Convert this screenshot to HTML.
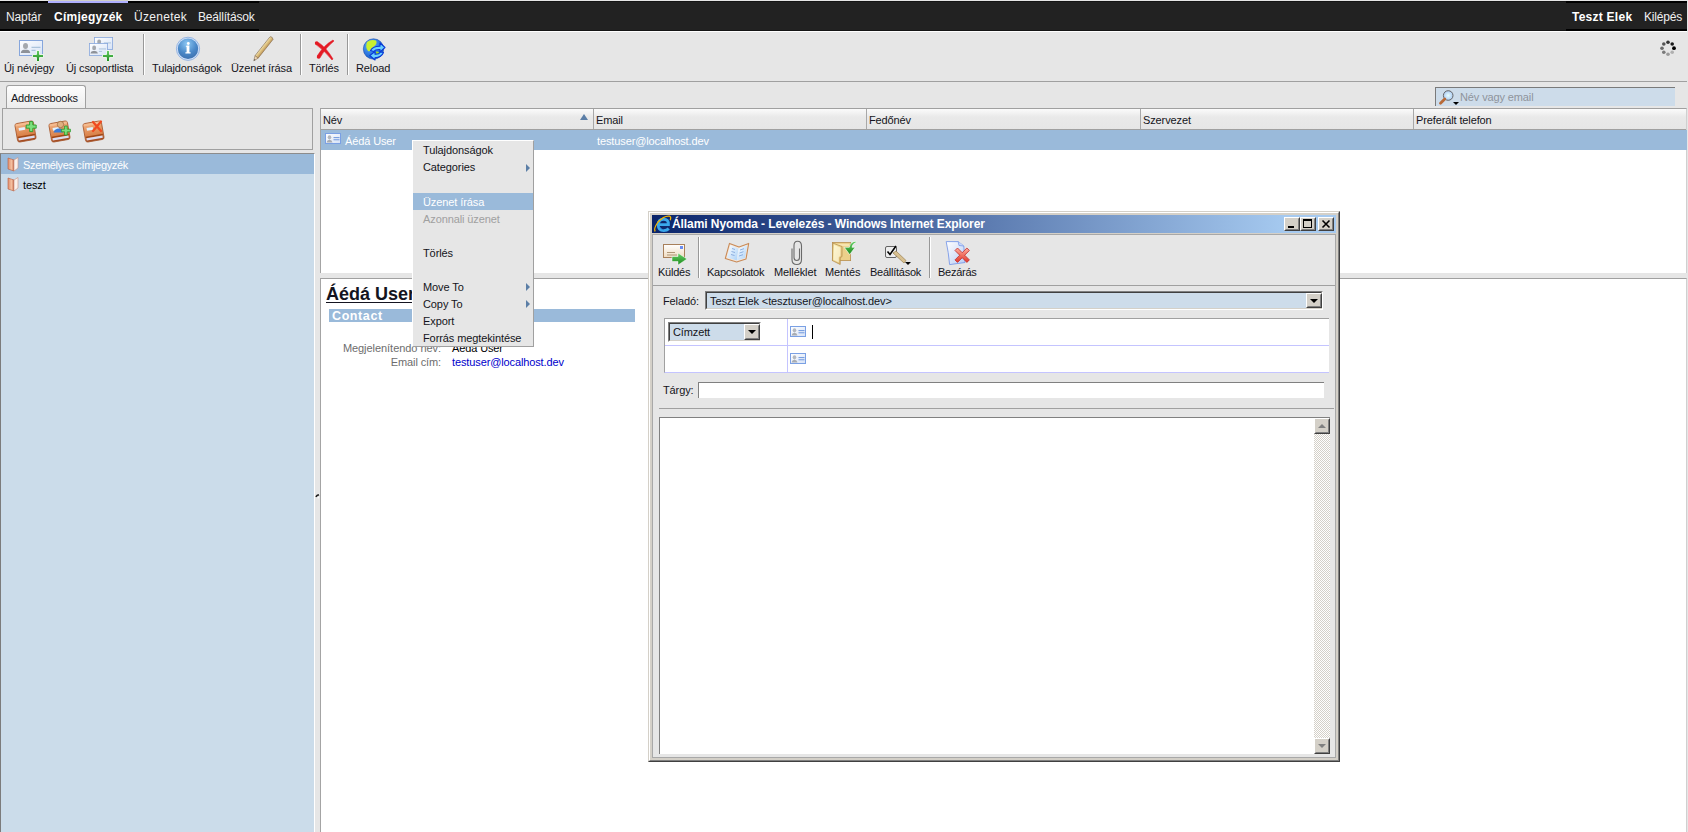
<!DOCTYPE html>
<html><head><meta charset="utf-8">
<style>
*{box-sizing:border-box;margin:0;padding:0}
html,body{width:1688px;height:832px;overflow:hidden;background:#e6e6e6;font-family:"Liberation Sans",sans-serif;font-size:11px;color:#141420}
.a{position:absolute}
.t{position:absolute;white-space:nowrap;line-height:13px;letter-spacing:-0.12px}
#topbar{left:0;top:1px;width:1687px;height:30px;background:#222;border-top:1px solid #151515;border-bottom:1px solid #151515}
#topbar .t{color:#f0f0f0;font-size:12px;top:8px;line-height:14px}
#tb{left:0;top:31px;width:1687px;height:51px;border-top:1px solid #fff;border-bottom:1px solid #a0a0a0;background:#e6e6e6}
.sep{position:absolute;width:2px;background:#989898;border-right:1px solid #fff;background-clip:padding-box}

.hdr{position:absolute;top:109px;height:21px;background:linear-gradient(#fbfbfb,#e9e9e9 40%,#e6e6e6);border-bottom:1px solid #a0a0a0}
.hcol{position:absolute;top:0;height:20px;border-left:1px solid #a8a8a8}
.mi{position:absolute;letter-spacing:-0.1px;left:10px;white-space:nowrap;line-height:17px;height:17px;padding-top:1px}

.w3d{position:absolute;border-style:solid;border-width:1px;border-color:#fff #404040 #404040 #fff;background:#d4d0c8}
.w3d:before{content:"";position:absolute;left:0;top:0;right:0;bottom:0;border-style:solid;border-width:1px;border-color:#d4d0c8 #808080 #808080 #d4d0c8}
.sunk{position:absolute;border-style:solid;border-width:1px;border-color:#808080 #fff #fff #808080}
.sunk:before{content:"";position:absolute;left:0;top:0;right:0;bottom:0;border-style:solid;border-width:1px;border-color:#404040 #d4d0c8 #d4d0c8 #404040}
.btn{position:absolute;background:#d4d0c8;border-style:solid;border-width:1px;border-color:#fff #404040 #404040 #fff}
.btn:before{content:"";position:absolute;left:0;top:0;right:0;bottom:0;border-style:solid;border-width:1px;border-color:#d4d0c8 #808080 #808080 #d4d0c8}
.ie .t{color:#141420}
</style></head><body>

<!-- top bar -->
<div id="topbar" class="a">
  <div class="a" style="left:0;top:-1px;width:259px;height:30px;border-top:2px solid #000;border-bottom:2px solid #000"></div><div class="a" style="left:1566px;top:-1px;width:121px;height:30px;border-top:2px solid #000;border-bottom:2px solid #000"></div><div class="a" style="left:48px;top:-1px;width:80px;height:2px;background:#b0b0ff"></div><div class="a" style="left:48px;top:-2px;width:80px;height:1px;background:#d0d0c8"></div>
  <div class="t" style="left:6px">Naptár</div>
  <div class="t" style="left:54px;font-weight:bold;color:#fff;letter-spacing:0.25px">Címjegyzék</div>
  <div class="t" style="left:134px;letter-spacing:0.3px">Üzenetek</div>
  <div class="t" style="left:198px;letter-spacing:-0.2px">Beállítások</div>
  <div class="t" style="left:1572px;font-weight:bold;color:#fff;letter-spacing:0.25px">Teszt Elek</div>
  <div class="t" style="left:1644px;letter-spacing:-0.2px">Kilépés</div>
</div>

<!-- toolbar -->
<div id="tb" class="a">
  <div class="t" style="left:4px;top:30px">Új névjegy</div>
  <div class="t" style="left:66px;top:30px">Új csoportlista</div>
  <div class="sep" style="left:143px;top:2px;height:41px"></div>
  <div class="t" style="left:152px;top:30px">Tulajdonságok</div>
  <div class="t" style="left:231px;top:30px">Üzenet írása</div>
  <div class="sep" style="left:300px;top:2px;height:41px"></div>
  <div class="t" style="left:309px;top:30px">Törlés</div>
  <div class="sep" style="left:347px;top:2px;height:41px"></div>
  <div class="t" style="left:356px;top:30px">Reload</div>
</div>


<!-- search -->
<div class="a" style="left:1435px;top:87px;width:240px;height:19px;background:#cddcea;border-top:1px solid #7a7a7a;border-left:1px solid #7a7a7a"></div>
<div class="t" style="left:1460px;top:91px;color:#8f949c">Név vagy email</div>

<!-- addressbooks tab -->
<div class="a" style="left:6px;top:85px;width:80px;height:24px;border:1px solid #a0a0a0;border-bottom:none;border-radius:3px 3px 0 0;background:linear-gradient(#fdfdfd,#ececec)"></div>
<div class="t" style="left:11px;top:92px;letter-spacing:-0.25px">Addressbooks</div>

<!-- left icon box -->
<div class="a" style="left:2px;top:108px;width:311px;height:42px;border:1px solid #a0a0a0;background:#e6e6e6"></div>

<!-- left list -->
<div class="a" style="left:0;top:153px;width:315px;height:679px;background:#cbdcea;border-top:1px solid #8c8c8c;border-left:1px solid #7c7c7c;border-right:1px solid #fff"></div>
<div class="a" style="left:1px;top:154px;width:313px;height:20px;background:#9abada"></div>
<div class="t" style="left:23px;top:159px;color:#fff;letter-spacing:-0.35px">Személyes címjegyzék</div>
<div class="t" style="left:23px;top:179px;color:#000">teszt</div>

<!-- splitter -->
<svg class="a" style="left:314px;top:492px" width="8" height="8"><path d="M1.2 4.6 Q2.5 2.3 4.6 2 L5.3 3.4 Q3.4 3.6 2.6 5.3 Z" fill="#1a1a1a"/><circle cx="4.3" cy="5.6" r="0.9" fill="#fff" opacity="0.8"/></svg>

<!-- grid -->
<div class="a" style="left:320px;top:108px;width:1367px;height:165px;background:#fff;border-top:1px solid #a0a0a0;border-left:1px solid #a4a4a4;border-right:1px solid #d0d0d0"></div>
<div class="hdr" style="left:321px;width:1365px">
  <div class="hcol" style="left:272px"></div>
  <div class="hcol" style="left:545px"></div>
  <div class="hcol" style="left:819px"></div>
  <div class="hcol" style="left:1092px"></div>
</div>
<div class="t" style="left:323px;top:114px">Név</div>
<div class="a" style="left:580px;top:114px;width:0;height:0;border-left:4px solid transparent;border-right:4px solid transparent;border-bottom:6px solid #5b7ea6"></div>
<div class="t" style="left:596px;top:114px">Email</div>
<div class="t" style="left:869px;top:114px">Fedőnév</div>
<div class="t" style="left:1143px;top:114px">Szervezet</div>
<div class="t" style="left:1416px;top:114px">Preferált telefon</div>
<div class="a" style="left:321px;top:130px;width:1366px;height:20px;background:#9abada"></div>
<div class="t" style="left:345px;top:135px;color:#fff">Áédá User</div>
<div class="t" style="left:597px;top:135px;color:#fff">testuser@localhost.dev</div>

<!-- preview pane -->
<div class="a" style="left:320px;top:278px;width:1367px;height:554px;background:#fff;border-top:1px solid #a0a0a0;border-left:1px solid #a4a4a4;border-right:1px solid #d0d0d0"></div>
<div class="t" style="left:326px;top:284px;font-size:18px;line-height:20px;font-weight:bold;color:#141420;text-decoration:underline;text-underline-offset:2px;text-decoration-thickness:1px;letter-spacing:0">Áédá User</div>
<div class="a" style="left:329px;top:309px;width:306px;height:13px;background:#9abada"></div>
<div class="t" style="left:332px;top:309px;font-size:12.5px;line-height:15px;font-weight:bold;color:#fff;letter-spacing:0.6px">Contact</div>
<div class="t" style="left:241px;width:200px;text-align:right;top:342px;color:#6d6d6d;letter-spacing:-0.05px">Megjelenítendo név:</div>
<div class="t" style="left:452px;top:342px;color:#000">Áédá User</div>
<div class="t" style="left:241px;width:200px;text-align:right;top:356px;color:#6d6d6d">Email cím:</div>
<div class="t" style="left:452px;top:356px;color:#0000cc">testuser@localhost.dev</div>

<!-- context menu -->
<div class="a" style="left:412px;top:140px;width:122px;height:207px;background:#e6e6e6;border-top:1px solid #fff;border-left:1px solid #fff;border-right:1px solid #a0a0a0;border-bottom:1px solid #a0a0a0">
  <div class="mi" style="top:0px">Tulajdonságok</div>
  <div class="mi" style="top:17px">Categories</div>
  <div class="a" style="left:0;top:52px;width:120px;height:17px;background:#9abada"></div>
  <div class="mi" style="top:52px;color:#fff">Üzenet írása</div>
  <div class="mi" style="top:69px;color:#a0a0a0">Azonnali üzenet</div>
  <div class="mi" style="top:103px">Törlés</div>
  <div class="mi" style="top:137px">Move To</div>
  <div class="mi" style="top:154px">Copy To</div>
  <div class="mi" style="top:171px">Export</div>
  <div class="mi" style="top:188px">Forrás megtekintése</div>
  <div class="a" style="left:113px;top:23px;border-top:4px solid transparent;border-bottom:4px solid transparent;border-left:4px solid #5b7ea6"></div>
  <div class="a" style="left:113px;top:142px;border-top:4px solid transparent;border-bottom:4px solid transparent;border-left:4px solid #5b7ea6"></div>
  <div class="a" style="left:113px;top:159px;border-top:4px solid transparent;border-bottom:4px solid transparent;border-left:4px solid #5b7ea6"></div>
</div>

<!-- IE window -->
<div class="ie">
<div class="a" style="left:648px;top:211px;width:692px;height:551px;background:#d4d0c8;border-style:solid;border-width:1px;border-color:#d4d0c8 #404040 #404040 #d4d0c8"></div>
<div class="a" style="left:649px;top:212px;width:690px;height:549px;border-style:solid;border-width:1px;border-color:#fff #808080 #808080 #fff"></div>
<div class="a" style="left:652px;top:215px;width:684px;height:18px;background:linear-gradient(90deg,#0a246a,#a6caf0 93%)"></div>
<div class="t" style="left:672px;top:217px;font-size:12px;line-height:14px;font-weight:bold;color:#fff;letter-spacing:-0.07px">Állami Nyomda - Levelezés - Windows Internet Explorer</div>
<div class="btn" style="left:1284px;top:217px;width:16px;height:14px"></div>
<div class="a" style="left:1288px;top:226px;width:6px;height:2px;background:#000"></div>
<div class="btn" style="left:1300px;top:217px;width:16px;height:14px"></div>
<div class="a" style="left:1303px;top:219px;width:9px;height:9px;border:1px solid #000;border-top-width:2px"></div>
<div class="btn" style="left:1318px;top:217px;width:16px;height:14px"></div>
<svg class="a" style="left:1318px;top:217px" width="16" height="14"><path d="M4.5 3.5 L11.5 10.5 M11.5 3.5 L4.5 10.5" stroke="#000" stroke-width="1.6"/></svg>

<!-- content -->
<div class="a" style="left:652px;top:234px;width:684px;height:524px;background:#e6e6e6;border:1px solid #a8a8a8"></div>
<div class="a" style="left:653px;top:285px;width:682px;height:1px;background:#a0a0a0"></div>
<div class="sep" style="left:698px;top:237px;height:41px"></div>
<div class="sep" style="left:929px;top:237px;height:41px"></div>
<div class="t" style="left:658px;top:266px;letter-spacing:-0.25px">Küldés</div>
<div class="t" style="left:707px;top:266px;letter-spacing:-0.25px">Kapcsolatok</div>
<div class="t" style="left:774px;top:266px">Melléklet</div>
<div class="t" style="left:825px;top:266px">Mentés</div>
<div class="t" style="left:870px;top:266px;letter-spacing:-0.25px">Beállítások</div>
<div class="t" style="left:938px;top:266px;letter-spacing:-0.25px">Bezárás</div>

<div class="t" style="left:663px;top:295px">Feladó:</div>
<div class="sunk" style="left:705px;top:291px;width:618px;height:19px;background:#cddcea"></div>
<div class="t" style="left:710px;top:295px">Teszt Elek &lt;tesztuser@localhost.dev&gt;</div>
<div class="btn" style="left:1306px;top:293px;width:16px;height:15px"></div>
<div class="a" style="left:1310px;top:299px;border-left:4px solid transparent;border-right:4px solid transparent;border-top:4px solid #000"></div>

<div class="a" style="left:664px;top:318px;width:665px;height:55px;background:#fff;border-top:1px solid #a0a0a0;border-left:1px solid #a0a0a0;border-bottom:1px solid #c4c4ff"></div>
<div class="a" style="left:665px;top:345px;width:664px;height:1px;background:#c4c4ff"></div>
<div class="a" style="left:787px;top:319px;width:1px;height:53px;background:#c4c4ff"></div>
<div class="sunk" style="left:668px;top:322px;width:93px;height:20px;background:#cddcea"></div>
<div class="t" style="left:673px;top:326px">Címzett</div>
<div class="btn" style="left:744px;top:324px;width:16px;height:16px"></div>
<div class="a" style="left:748px;top:330px;border-left:4px solid transparent;border-right:4px solid transparent;border-top:4px solid #000"></div>
<div class="a" style="left:812px;top:325px;width:1px;height:14px;background:#000"></div>

<div class="t" style="left:663px;top:384px">Tárgy:</div>
<div class="a" style="left:698px;top:382px;width:626px;height:16px;background:#fff;border-top:1px solid #808080;border-left:1px solid #808080"></div>
<div class="a" style="left:659px;top:408px;width:675px;height:1px;background:#a0a0a0"></div>

<div class="a" style="left:659px;top:417px;width:671px;height:337px;background:#fff;border-top:1px solid #808080;border-left:1px solid #808080"></div>
<svg class="a" style="left:1314px;top:434px" width="16" height="304" shape-rendering="crispEdges"><defs><pattern id="chk" width="2" height="2" patternUnits="userSpaceOnUse"><rect width="2" height="2" fill="#fff"/><rect width="1" height="1" fill="#d4d0c8"/><rect x="1" y="1" width="1" height="1" fill="#d4d0c8"/></pattern></defs><rect width="16" height="304" fill="url(#chk)"/></svg>
<div class="btn" style="left:1314px;top:418px;width:16px;height:16px"></div>
<div class="a" style="left:1318px;top:424px;border-left:4px solid transparent;border-right:4px solid transparent;border-bottom:4px solid #808080"></div>
<div class="btn" style="left:1314px;top:738px;width:16px;height:16px"></div>
<div class="a" style="left:1318px;top:744px;border-left:4px solid transparent;border-right:4px solid transparent;border-top:4px solid #808080"></div>
</div>

<!-- icons overlay -->
<svg class="a" style="left:0;top:0;pointer-events:none" width="1688" height="832" viewBox="0 0 1688 832">
<defs>
  <linearGradient id="gCard" x1="0" y1="0" x2="1" y2="1"><stop offset="0" stop-color="#ffffff"/><stop offset="1" stop-color="#d6e2f6"/></linearGradient>
  <linearGradient id="gGreen" x1="0" y1="0" x2="0" y2="1"><stop offset="0" stop-color="#6ad06a"/><stop offset="1" stop-color="#1a8a1a"/></linearGradient>
  <radialGradient id="gInfo" cx="0.45" cy="0.25" r="0.85"><stop offset="0" stop-color="#8cc8f4"/><stop offset="0.55" stop-color="#4a88c8"/><stop offset="1" stop-color="#3a6aa8"/></radialGradient>
  <linearGradient id="gPencil" gradientUnits="userSpaceOnUse" x1="262" y1="46" x2="265.5" y2="48.8"><stop offset="0" stop-color="#fffcd8"/><stop offset="0.35" stop-color="#e8d090"/><stop offset="1" stop-color="#c09858"/></linearGradient>
  <radialGradient id="gGlobe" cx="0.35" cy="0.3" r="0.8"><stop offset="0" stop-color="#60b0ff"/><stop offset="1" stop-color="#0a50c8"/></radialGradient>
  <linearGradient id="gBook" x1="0" y1="0" x2="0" y2="1"><stop offset="0" stop-color="#f2b080"/><stop offset="0.7" stop-color="#d98048"/><stop offset="1" stop-color="#9a4018"/></linearGradient>
  <linearGradient id="gBook2" x1="0" y1="0" x2="1" y2="0"><stop offset="0" stop-color="#e09070"/><stop offset="0.6" stop-color="#f4c0a0"/><stop offset="1" stop-color="#c87050"/></linearGradient>
  <linearGradient id="gEnv" x1="0" y1="0" x2="0" y2="1"><stop offset="0" stop-color="#ffffff"/><stop offset="1" stop-color="#f0dcc0"/></linearGradient>
  <linearGradient id="gFolder" x1="0" y1="0" x2="1" y2="1"><stop offset="0" stop-color="#fff4b8"/><stop offset="1" stop-color="#d8b060"/></linearGradient>
  <linearGradient id="gPage" x1="0" y1="0" x2="1" y2="1"><stop offset="0" stop-color="#ffffff"/><stop offset="1" stop-color="#b8ccf4"/></linearGradient>
  <radialGradient id="gLens" cx="0.5" cy="0.5" r="0.6"><stop offset="0" stop-color="#e8ffff"/><stop offset="1" stop-color="#a0c0f0"/></radialGradient>
  <symbol id="card" viewBox="0 0 24 16"><rect x="0.5" y="0.5" width="23" height="15" fill="url(#gCard)" stroke="#86a6dc"/>
    <ellipse cx="6.5" cy="6" rx="2.5" ry="3" fill="#a4a8ae"/><path d="M1.8 13 Q2 10.2 5 9.8 L8 9.8 Q11 10.2 11.2 13 Z" fill="#8e9298"/>
    <rect x="12.5" y="6.8" width="9" height="1" fill="#9cb8d4"/><rect x="12.5" y="9.8" width="4" height="1" fill="#9cb8d4"/></symbol>
  <symbol id="plus" viewBox="0 0 12 12"><path d="M4.5 0.5 h3 v4 h4 v3 h-4 v4 h-3 v-4 h-4 v-3 h4 z" fill="url(#gGreen)" stroke="#fff" stroke-width="0.8" stroke-linejoin="round"/></symbol>
  <symbol id="book" viewBox="0 0 24 24"><g transform="rotate(-10 12 12)"><rect x="3" y="3" width="18" height="18" rx="2" fill="url(#gBook)" stroke="#a85a30" stroke-width="0.8"/><rect x="3.6" y="15.6" width="16.8" height="1.6" fill="#a04818"/><rect x="4.2" y="17.2" width="15.6" height="2.2" fill="#dcdcf0"/><rect x="6" y="7.6" width="6" height="2.6" fill="#e0f2ff"/><rect x="3.5" y="3.6" width="17" height="2" fill="#f8c8a0" opacity="0.6"/></g></symbol>
  <symbol id="abook" viewBox="0 0 12 16"><path d="M1 2 L7 4 L7 15 L1 13 Z" fill="url(#gBook2)" stroke="#b86040" stroke-width="0.6"/><path d="M7 4 L11 1.5 L11 12 L7 15 Z" fill="#fbf0ea" stroke="#c89080" stroke-width="0.6"/></symbol>
  <symbol id="scard" viewBox="0 0 16 11"><rect x="0.5" y="0.5" width="15" height="10" fill="url(#gCard)" stroke="#7aa0e4"/><ellipse cx="4.5" cy="4.3" rx="1.8" ry="2.1" fill="#b4b8be"/><path d="M1.5 9.5 Q2 7 4.5 6.8 Q7 7 7.5 9.5 Z" fill="#a8acb2"/><rect x="8.5" y="4" width="6" height="1.1" fill="#7aa0e0"/><rect x="8.5" y="6.2" width="6" height="1.1" fill="#7aa0e0"/></symbol>
</defs>

<!-- main toolbar -->
<use href="#card" x="19" y="40" width="24" height="16"/>
<use href="#plus" x="32" y="50" width="12" height="12"/>
<use href="#card" x="94" y="37" width="19" height="13"/>
<use href="#card" x="89" y="43" width="19" height="13"/>
<use href="#plus" x="102" y="50" width="12" height="12"/>

<circle cx="188" cy="48.8" r="11.6" fill="#cfe0f8" stroke="#90b0e0" stroke-width="0.9"/>
<circle cx="188" cy="48.8" r="10.2" fill="url(#gInfo)"/>
<path d="M186.6 45.5 h2.8 v6.8 h1.2 v1.3 h-5.2 v-1.3 h1.2 v-5.5 h-1 z" fill="#fff"/>
<circle cx="188.3" cy="43.5" r="1.4" fill="#fff"/>

<path d="M255 55.7 L270 36.8 Q272 36 273.1 39.3 L258.1 58.2 Z" fill="url(#gPencil)" stroke="#8a7050" stroke-width="0.7"/>
<path d="M255 55.7 L258.1 58.2 L253.8 60.8 Z" fill="#f0d8b8" stroke="#8a7050" stroke-width="0.6"/>
<path d="M254.3 59 L255.6 60 L253.8 60.8 Z" fill="#555"/>

<path d="M317.65 41.89 Q326 47 333.04 58.98 L331.96 60.02 Q324 50 315.35 44.11 Z" fill="#e41a24" stroke="#e41a24" stroke-width="0.5" stroke-linejoin="round"/><circle cx="316.5" cy="43" r="1.7" fill="#e41a24"/>
<path d="M332.98 40.03 L334.02 40.97 Q326 47 319.76 58.14 L317.24 55.86 Q324 45 332.98 40.03 Z" fill="#e41a24" stroke="#e41a24" stroke-width="0.5" stroke-linejoin="round"/><circle cx="318.5" cy="57" r="1.75" fill="#e41a24"/>


<circle cx="373.5" cy="49" r="10.2" fill="url(#gGlobe)" stroke="#1a4aa8" stroke-width="0.6"/>
<path d="M367 42 Q371 39 376 40.5 Q377.5 43 375 45.5 Q372 47 371 50 Q369.5 52 368 51 Q365 47 367 42 Z" fill="#c8f030"/>
<path d="M376 51.5 Q378.5 51 379.5 53 Q378 55 376.5 54.5 Z" fill="#a8e020"/>
<path d="M370.5 50.5 Q373 46 380 46.2 L380 43 L385 47.5 L380 51.8 L380 49.5 Q375.5 49.2 373.5 51.5 Z" fill="#6ad0ff" stroke="#0a3ad8" stroke-width="1.1" stroke-linejoin="round"/>
<path d="M383.5 52.5 Q381.5 57.5 375 57.8 L375 60 L369.8 55.5 L375 51.5 L375 54.2 Q379 54.5 380.5 52 Z" fill="#6ad0ff" stroke="#0a3ad8" stroke-width="1.1" stroke-linejoin="round"/>

<!-- spinner -->
<circle cx="1668" cy="42.2" r="1.8" fill="#333"/>
<circle cx="1672.2" cy="44" r="1.8" fill="#1a1a1a"/>
<circle cx="1674" cy="48.2" r="1.9" fill="#000"/>
<circle cx="1672.2" cy="52.2" r="1.8" fill="#b0b0b0"/>
<circle cx="1668" cy="54.2" r="1.8" fill="#9a9a9a"/>
<circle cx="1663.8" cy="52.2" r="1.8" fill="#7a7a7a"/>
<circle cx="1662" cy="48.2" r="1.8" fill="#6a6a6a"/>
<circle cx="1663.8" cy="44" r="1.8" fill="#555"/>

<!-- search icon -->
<circle cx="1448.2" cy="95.5" r="4.8" fill="url(#gLens)" stroke="#666" stroke-width="1"/>
<path d="M1444.8 99 L1440.5 103.3" stroke="#b86a38" stroke-width="2.8" stroke-linecap="round"/>
<path d="M1453 102 L1459 102 L1456 105 Z" fill="#000"/>

<!-- addressbook icons -->
<use href="#book" x="13" y="119" width="25" height="25"/>
<use href="#book" x="47" y="119" width="25" height="25"/>
<use href="#book" x="81" y="119" width="25" height="25"/>
<path d="M29.6 121.6 h3.2 v3.4 h3.4 v3.2 h-3.4 v3.4 h-3.2 v-3.4 h-3.4 v-3.2 h3.4 z" fill="#7ee07e" stroke="#2a9a2a" stroke-width="0.9"/>
<circle cx="60.5" cy="124.5" r="3.2" fill="#e0b080" stroke="#8a5a30" stroke-width="0.6"/>
<path d="M53.5 132.5 Q55 128 60 128.5 Q64 129 63 132.5 Z" fill="#3a7ad8"/>
<path d="M64.6 126 h2.6 v3.2 h3.2 v2.6 h-3.2 v3.2 h-2.6 v-3.2 h-3.2 v-2.6 h3.2 z" fill="#7ee07e" stroke="#2a9a2a" stroke-width="0.8"/>
<path d="M93 122 L101 131 M101 121.5 L93 131" stroke="#f04a20" stroke-width="2.2" stroke-linecap="round"/>

<use href="#abook" x="7" y="156" width="12" height="16"/>
<use href="#abook" x="7" y="176" width="12" height="16"/>

<!-- grid row icon -->
<use href="#scard" x="325" y="133" width="16" height="11"/>
</svg>

<!-- IE icons -->
<svg class="a" style="left:0;top:0;pointer-events:none" width="1688" height="832" viewBox="0 0 1688 832">
<defs>
  <linearGradient id="gTitle" x1="0" y1="0" x2="1" y2="0"><stop offset="0" stop-color="#0a246a"/><stop offset="1" stop-color="#a6caf0"/></linearGradient>
  <linearGradient id="gBk" x1="0" y1="0" x2="1" y2="1"><stop offset="0" stop-color="#ffffff"/><stop offset="1" stop-color="#a8d0f8"/></linearGradient>
</defs>
<!-- title IE logo -->
<path d="M658.8 224.6 H668.4 Q668.6 219.2 663.6 219.2 Q658.3 219.2 658.3 225 Q658.3 230.6 663.8 230.6 Q666.8 230.6 668.8 228.6" stroke="#3aa8ec" stroke-width="2.9" fill="none"/>
<path d="M659.5 226.5 Q660.5 229.5 663.8 229.8" stroke="#1a6ac0" stroke-width="1" fill="none" opacity="0.6"/>
<path d="M655.2 231.5 Q653.2 229 658 222 Q664 215.5 669.5 216.2 Q671.5 217 670.2 220.2" stroke="#f2b400" stroke-width="1.3" fill="none"/>
<!-- Kuldes -->
<rect x="663.5" y="244.5" width="21" height="13" fill="url(#gEnv)" stroke="#a8805a"/>
<rect x="680" y="246" width="3" height="3" fill="#6a8cf0"/>
<rect x="667" y="252" width="8" height="1" fill="#b09878"/>
<rect x="667" y="254.5" width="10" height="1" fill="#b09878"/>
<path d="M672 256.5 h6 v-3.5 l9 6 l-9 6 v-3.5 h-6 z" fill="url(#gGreen)" stroke="#fff" stroke-width="0.5"/>

<!-- Kapcsolatok -->
<path d="M729.5 243.4 L739 247 L748.7 243.4 L746 259 L736.6 262 L725.3 258.5 Z" fill="#f8e8d8" stroke="#c88a58" stroke-width="1.1" stroke-linejoin="round"/>
<path d="M730.5 245 L738.5 248.5 L736.8 260.5 L727 257.5 Z" fill="url(#gBk)"/>
<path d="M738.5 248.5 L747.3 245 L745 258 L736.8 260.5 Z" fill="url(#gBk)"/>
<path d="M732 248.5 l3 1 M731.5 251.5 l3.5 1 M731 254.5 l3.5 1 M740 250 l4 -1.3 M739.5 253 l4 -1.3 M739 256 l4 -1.3" stroke="#7aa0d8" stroke-width="0.8"/>

<!-- Melleklet -->
<path d="M792 248.5 V259.5 Q792 264.5 796.8 264.5 Q801.5 264.5 801.5 259.5 V246 Q801.5 241.2 797.5 241.2 Q794 241.2 794 245.5 V257.5 Q794 260.5 796.8 260.5 Q799.5 260.5 799.5 257.5 V248.5" fill="none" stroke="#6a6a6a" stroke-width="1.1"/>

<!-- Mentes -->
<rect x="832.4" y="242.4" width="18.2" height="18.2" fill="#ecd08a" stroke="#b89050" stroke-width="0.8"/>
<rect x="834" y="244" width="15" height="2" fill="#f6e4b0"/>
<path d="M833 243.2 L842 246.5 L842 256.6 L840.2 257.6 L840.2 264.5 L832.4 260.6 Z" fill="url(#gFolder)" stroke="#b89050" stroke-width="0.8" stroke-linejoin="round"/>
<path d="M834 245 L840.5 247.5 L840.5 256 L838.8 257 L838.8 262.5 L833.4 259.8 Z" fill="#fffbe0" opacity="0.7"/>
<path d="M856.2 241.2 Q850.5 241.2 849.3 247.3 L844.2 247.3 L849.7 254.6 L855.2 247.3 L852 247.3 Q852.2 243.8 856.2 242.4 Z" fill="url(#gGreen)" stroke="#fff" stroke-width="0.6"/>

<!-- Beallitasok -->
<rect x="885.5" y="246.5" width="11" height="11" rx="1.5" fill="#eeeeee" stroke="#555" stroke-width="0.9"/>
<path d="M887.5 251.5 L890 254.5 L896 246" stroke="#000" stroke-width="1.6" fill="none"/>
<path d="M893 253 L896 251 L906 260.5 L904 263 Z" fill="#d8c090" stroke="#9a8050" stroke-width="0.7"/>
<path d="M905 262 h6 l-3 3 z" fill="#000"/>

<!-- Bezaras -->
<defs><linearGradient id="gRed" x1="0" y1="0" x2="0" y2="1"><stop offset="0" stop-color="#ffb0a0"/><stop offset="0.5" stop-color="#f07060"/><stop offset="1" stop-color="#e03a30"/></linearGradient></defs>
<path d="M946.2 241.6 L958.2 241.6 L963.8 246 L965 262.5 L949.6 264.6 Q948.5 252 946.2 241.6 Z" fill="url(#gPage)" stroke="#7a9ae8" stroke-width="0.9"/>
<path d="M958.2 241.6 L959 245.5 L963.8 246" fill="#c8d8fa" stroke="#7a9ae8" stroke-width="0.8"/>
<path d="M955 250.5 L957.5 248 L962.2 252.7 L966.9 248 L969.4 250.5 L964.7 255.2 L969.4 259.9 L966.9 262.4 L962.2 257.7 L957.5 262.4 L955 259.9 L959.7 255.2 Z" fill="url(#gRed)" stroke="#c02828" stroke-width="0.8" stroke-linejoin="round"/>

<!-- contact icons in recipients -->
<use href="#scard" x="790" y="326" width="16" height="11"/>
<use href="#scard" x="790" y="353" width="16" height="11"/>
</svg>
</body></html>
